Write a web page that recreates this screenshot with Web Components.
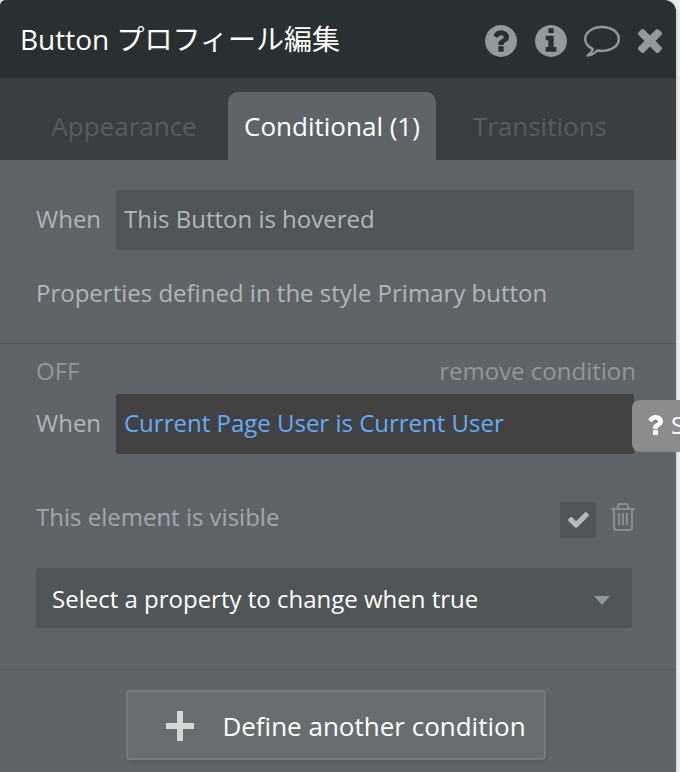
<!DOCTYPE html>
<html lang="en">
<head>
<meta charset="utf-8">
<title>Property editor</title>
<style>
  body {
    margin: 0;
    min-height: 100vh;
    background: #efefef;
    font-family: "Open Sans", "Noto Sans CJK JP", sans-serif;
    font-size: 24px;
    line-height: 34px;
    color: #b0b6b9;
  }
</style>
</head>
<body>
<editor-panel>
  <panel-header slot="header" heading="Button プロフィール編集"></panel-header>
  <panel-tabs slot="tabs"></panel-tabs>
  <panel-section class="first">
    <when-field name="first" value="This Button is hovered"></when-field>
    <style-note>Properties defined in the style Primary button</style-note>
  </panel-section>
  <panel-section class="second">
    <condition-bar></condition-bar>
    <when-field name="second" value="Current Page User is Current User" active>
      <help-tip slot="tip">S</help-tip>
    </when-field>
    <property-row label="This element is visible"></property-row>
    <property-select></property-select>
  </panel-section>
  <panel-section class="third">
    <define-button>Define another condition</define-button>
  </panel-section>
</editor-panel>

<script>
  const define = (name, html) => {
    customElements.define(name, class extends HTMLElement {
      constructor() {
        super();
        const template = document.createElement("template");
        template.innerHTML = html;
        this.attachShadow({ mode: "open" }).append(template.content.cloneNode(true));
      }
      connectedCallback() {
        for (const node of this.shadowRoot.querySelectorAll("[data-text]"))
          node.textContent = this.getAttribute(node.dataset.text);
        for (const node of this.shadowRoot.querySelectorAll("[data-value]"))
          node.value = this.getAttribute(node.dataset.value);
      }
    });
  };

  define("editor-panel", `
    <style>
      :host { display: flex; flex-direction: column; min-height: 100vh; margin-right: 4px;
        background: #5f6468; border-radius: 6px 12px 0 0; box-shadow: 0 0 4px #bbb; }
    </style>
    <slot name="header"></slot>
    <slot name="tabs"></slot>
    <slot></slot>`);

  define("panel-header", `
    <style>
      :host { display: flex; align-items: center; justify-content: space-between;
        padding: 18px 12px 18px 20px; background: #293031; border-radius: 6px 12px 0 0; }
      h1 { margin: 0; font-size: 28px; font-weight: 400; line-height: 42px; color: #fff; }
      nav { display: flex; align-items: center; gap: 16px; padding-top: 4px; }
      button { display: flex; padding: 0; border: 0; background: none; color: #929a9d; }
      svg { display: block; fill: currentColor; }
    </style>
    <h1 data-text="heading"></h1>
    <nav>
      <button aria-label="Help"><svg width="34" height="32" viewBox="80 128 1632 1536"><path d="M1024 1376v-192q0-14-9-23t-23-9h-192q-14 0-23 9t-9 23v192q0 14 9 23t23 9h192q14 0 23-9t9-23zm256-672q0-88-55.5-163t-138.5-116-170-41q-243 0-371 213-15 24 8 42l132 100q7 6 19 6 16 0 25-12 53-68 86-92 34-24 86-24 48 0 85.5 26t37.5 59q0 38-20 61t-68 45q-63 28-115.5 86.5t-52.5 125.5v36q0 14 9 23t23 9h192q14 0 23-9t9-23q0-19 21.5-49.5t54.5-49.5q32-18 49-28.5t46-35 44.5-48 28-60.5 12.5-81zm384 192q0 209-103 385.5t-279.5 279.5-385.5 103-385.5-103-279.5-279.5-103-385.5 103-385.5 279.5-279.5 385.5-103 385.5 103 279.5 279.5 103 385.5z"/></svg></button>
      <button aria-label="Info"><svg width="34" height="32" viewBox="80 128 1632 1536"><path d="M1152 1376v-160q0-14-9-23t-23-9h-96v-512q0-14-9-23t-23-9h-320q-14 0-23 9t-9 23v160q0 14 9 23t23 9h96v320h-96q-14 0-23 9t-9 23v160q0 14 9 23t23 9h448q14 0 23-9t9-23zm-128-896v-160q0-14-9-23t-23-9h-192q-14 0-23 9t-9 23v160q0 14 9 23t23 9h192q14 0 23-9t9-23zm640 416q0 209-103 385.5t-279.5 279.5-385.5 103-385.5-103-279.5-279.5-103-385.5 103-385.5 279.5-279.5 385.5-103 385.5 103 279.5 279.5 103 385.5z"/></svg></button>
      <button aria-label="Comments"><svg width="36" height="32" viewBox="0 0 36 32"><path d="M18 2C9 2 1.200 7 1.200 14c0 4.300 3 7.800 7.500 9.900C8 27 6 29 3.600 30.500c4.300-.5 7.400-2.500 9.600-5 1.500.3 3.100.4 4.800.4 9 0 16.800-5 16.800-12S27 2 18 2z" fill="none" stroke="currentColor" stroke-width="2.400" stroke-linejoin="round"/></svg></button>
      <button aria-label="Close"><svg width="28" height="24" viewBox="203 366 1386 1188"><path d="M1490 1322q0 40-28 68l-136 136q-28 28-68 28t-68-28l-294-294-294 294q-28 28-68 28t-68-28l-136-136q-28-28-28-68t28-68l294-294-294-294q-28-28-28-68t28-68l136-136q28-28 68-28t68 28l294 294 294-294q28-28 68-28t68 28l136 136q28 28 28 68t-28 68l-294 294 294 294q28 28 28 68z"/></svg></button>
    </nav>`);

  define("panel-tabs", `
    <style>
      :host { display: block; background: #3b3e41; }
      div { display: grid; grid-template-columns: 1fr auto 1fr; padding: 14px 32px 0 20px; }
      button { height: 68px; padding: 0 16px; border: 0; background: none;
        font: 26px/68px "Open Sans", sans-serif; color: #565c5f; }
      [aria-selected="true"] { background: #5f6468; border-radius: 10px 10px 0 0; color: #fff; }
    </style>
    <div role="tablist">
      <button role="tab" aria-selected="false">Appearance</button>
      <button role="tab" aria-selected="true">Conditional (1)</button>
      <button role="tab" aria-selected="false">Transitions</button>
    </div>`);

  define("panel-section", `
    <style>
      :host { display: flex; flex-direction: column; padding: 0 40px 0 36px; }
      :host(.first) { gap: 26px; padding-top: 30px; padding-bottom: 33px; border-bottom: 1px solid #53585b; }
      :host(.second) { padding-top: 10px; padding-bottom: 41px; border-bottom: 1px solid #53585b; }
      :host(.third) { align-items: center; padding-top: 20px; padding-bottom: 12px; }
    </style>
    <slot></slot>`);

  define("style-note", `
    <style>:host { display: block; }</style>
    <slot></slot>`);

  define("when-field", `
    <style>
      :host { display: block; margin-right: 2px; }
      div { position: relative; display: grid; grid-template-columns: 80px 1fr; align-items: center; }
      label { padding-bottom: 2px; }
      input { box-sizing: border-box; width: 100%; height: 60px; padding: 0 8px 4px; border: 0;
        border-radius: 2px; outline: 0; background: #505558; color: #b0b8bc; font: inherit; }
      :host([active]) input { background: #424242; color: #64acf7; }
    </style>
    <div>
      <label for="expression">When</label>
      <input id="expression" type="text" readonly data-value="value">
      <slot name="tip"></slot>
    </div>`);

  define("help-tip", `
    <style>
      :host { position: absolute; left: calc(100% - 2px); right: -46px; top: 6px; box-sizing: border-box;
        display: flex; align-items: center; gap: 8px; height: 52px; padding: 0 0 2px 15px;
        overflow: hidden; border-radius: 8px 0 0 8px; background: #8b8c8e; color: #fff; }
      svg { flex: none; fill: currentColor; }
    </style>
    <svg width="16" height="22" viewBox="387 256 1017 1280" aria-hidden="true"><path d="M1088 1256v240q0 16-12 28t-28 12h-240q-16 0-28-12t-12-28v-240q0-16 12-28t28-12h240q16 0 28 12t12 28zm316-600q0 54-15.5 101t-35 76.500-55 59.500-57.500 43.500-61 35.500q-41 23-68.500 65t-27.500 67q0 17-12 32.500t-28 15.500h-240q-15 0-25.500-18.500t-10.500-37.500v-45q0-83 65-156.500t143-108.500q59-27 84-56t25-76q0-42-46.500-74t-107.500-32q-65 0-108 29-35 25-107 115-13 16-31 16-12 0-25-8l-164-125q-13-10-15.500-25t5.500-28q160-266 464-266 80 0 161 31t146 83 106 127.500 41 158.500z"/></svg>
    <span><slot></slot></span>`);

  define("condition-bar", `
    <style>
      :host { display: flex; justify-content: space-between; margin-bottom: 6px; color: #92979a; }
      button { padding: 0; border: 0; background: none; color: inherit; font: inherit; }
    </style>
    <span>OFF</span>
    <button>remove condition</button>`);

  define("property-row", `
    <style>
      :host { display: flex; align-items: flex-start; margin-top: 48px; line-height: 30px; color: #a3a8ab; }
      label { flex: 1; }
      .box { display: grid; margin-right: 14px; place-items: center; }
      .box > * { grid-area: 1 / 1; }
      input { appearance: none; width: 36px; height: 36px; margin: 0; border-radius: 2px; background: #505558; }
      .box svg { pointer-events: none; fill: #b3bbbf; }
      button { padding: 0; border: 0; background: none; color: #898c8e; }
      svg { display: block; }
    </style>
    <label for="visible" data-text="label"></label>
    <span class="box">
      <input id="visible" type="checkbox" checked>
      <svg width="21" height="16" viewBox="121 334 1550 1188" aria-hidden="true"><path d="M1671 566q0 40-28 68l-724 724-136 136q-28 28-68 28t-68-28l-136-136-362-362q-28-28-28-68t28-68l136-136q28-28 68-28t68 28l294 295 656-657q28-28 68-28t68 28l136 136q28 28 28 68z"/></svg>
    </span>
    <button aria-label="Delete property"><svg width="26" height="30" viewBox="0 0 26 30" fill="none" stroke="currentColor" stroke-width="2.200"><path d="M1 7h24M7.500 6.500c0-3 1.500-4.500 3-4.500h5c1.500 0 3 1.500 3 4.500M4 7v18.500q0 2.500 2 2.500h14q2 0 2-2.500V7M9 11v12M13 11v12M17 11v12"/></svg></button>`);

  define("property-select", `
    <style>
      :host { display: grid; align-items: center; margin: 30px 4px 0 0; }
      select, svg { grid-area: 1 / 1; }
      select { appearance: none; width: 100%; height: 60px; padding: 2px 56px 0 16px; border: 0;
        border-radius: 2px; background: #505558; color: #fff; font: inherit; }
      svg { justify-self: end; margin: 4px 22px 0 0; pointer-events: none; fill: #8f989b; }
    </style>
    <select aria-label="Property to change">
      <option>Select a property to change when true</option>
    </select>
    <svg width="16" height="10" viewBox="0 0 16 10" aria-hidden="true"><path d="M0 1h16L8 10z"/></svg>`);

  define("define-button", `
    <style>
      :host { display: flex; }
      button { display: flex; align-items: center; gap: 28px; height: 70px; padding: 2px 18px 0 38px;
        border: 2px solid #74797c; border-radius: 4px; background: #686d70;
        box-shadow: 1px 2px 3px rgba(0, 0, 0, .1); color: #fff; font-family: inherit; font-size: 26px; line-height: 40px; }
      svg { fill: #d4d7d8; }
    </style>
    <button>
      <svg width="28" height="30" viewBox="0 0 28 30" aria-hidden="true"><path d="M11 0h6v12h11v6H17v12h-6V18H0v-6h11z"/></svg>
      <slot></slot>
    </button>`);
</script>
</body>
</html>
